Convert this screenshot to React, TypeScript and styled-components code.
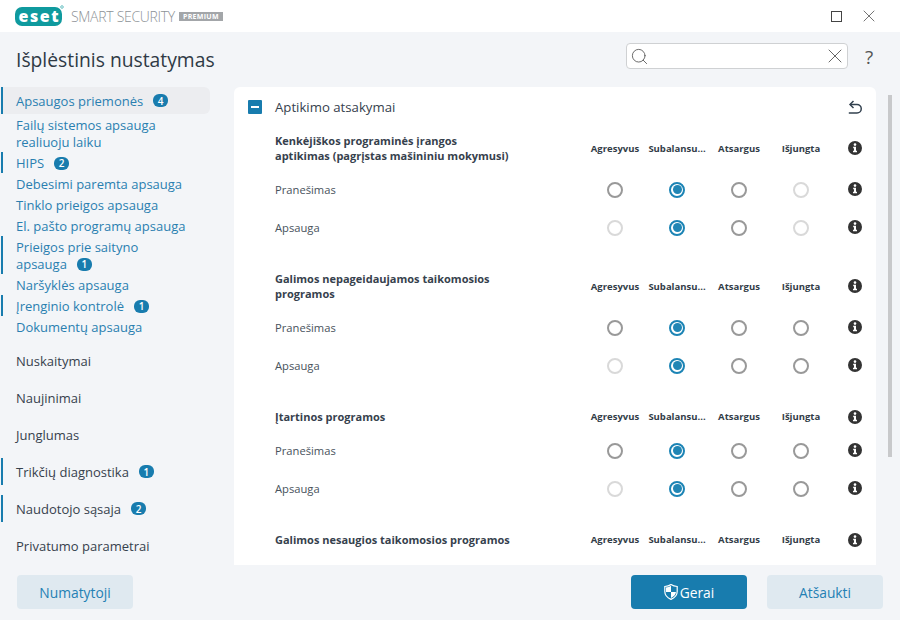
import React, { FC } from 'react';
import styled, { createGlobalStyle } from 'styled-components';
import { Search, X } from 'lucide-react';

const GlobalStyle = createGlobalStyle`
  html, body {
    margin: 0;
    padding: 0;
    background: #f3f5f8;
  }
  * {
    box-sizing: border-box;
  }
`;

const Window = styled.div`
  width: 900px;
  height: 620px;
  display: flex;
  flex-direction: column;
  overflow: hidden;
  background: #f3f5f8;
  color: #36414d;
  font-family: 'Open Sans', 'Noto Sans', sans-serif;
`;

const TitleBar = styled.div`
  height: 32px;
  flex: none;
  display: flex;
  align-items: center;
  padding: 0 21px 0 15px;
  background: #fff;
`;

const ProductName = styled.span`
  margin-left: 7px;
  font-size: 14px;
  font-weight: 300;
  letter-spacing: -0.3px;
  color: #8d9296;
`;

const Edition = styled.span`
  margin-left: 4px;
  height: 9px;
  padding: 0 4px;
  display: flex;
  align-items: center;
  background: #a3a6a9;
  color: #fff;
  font-size: 7px;
  font-weight: 700;
  letter-spacing: 0.3px;
`;

const WindowControls = styled.div`
  margin-left: auto;
  display: flex;
  align-items: center;
  gap: 17px;
  color: #444;
`;

const Maximize = styled.span`
  width: 11px;
  height: 11px;
  border: 1px solid #444;
`;

const Header = styled.div`
  height: 55px;
  flex: none;
  display: flex;
  align-items: center;
  padding: 0 20px 0 16px;
`;

const Title = styled.h1`
  margin: 0;
  font-size: 19.3px;
  font-weight: 500;
  color: #2f3a45;
`;

const SearchBox = styled.div`
  margin: 0 0 7px auto;
  width: 222px;
  height: 26px;
  display: flex;
  align-items: center;
  justify-content: space-between;
  padding: 0 0 0 3px;
  background: #fff;
  border: 1px solid #cfd1d3;
  border-radius: 4px;
  color: #555;
`;

const Help = styled.span`
  width: 22px;
  margin: 0 0 6px 10px;
  text-align: center;
  font-size: 19px;
  color: #555;
`;

const Body = styled.div`
  flex: 1;
  min-height: 0;
  display: flex;
`;

const Sidebar = styled.nav`
  width: 209px;
  margin-left: 1px;
  flex: none;
  overflow: hidden;
  display: flex;
  flex-direction: column;
`;

const TopItem = styled.div<{ $marked?: boolean; $active?: boolean }>`
  height: 27px;
  flex: none;
  margin-bottom: 10px;
  display: flex;
  align-items: center;
  padding-left: 13px;
  border-left: 2px solid ${(p) => (p.$marked ? '#187cae' : 'transparent')};
  border-radius: 0 6px 6px 0;
  background: ${(p) => (p.$active ? '#ecedf0' : 'transparent')};
  color: ${(p) => (p.$active ? '#2a7fb0' : '#36414d')};
  font-size: 13px;
`;

const SubList = styled.div`
  margin: -10px 0 10px;
  flex: none;
  display: flex;
  flex-direction: column;
`;

const SubItem = styled.div<{ $marked?: boolean }>`
  min-height: 21px;
  padding: 3px 18px 1px 13px;
  border-left: 2px solid ${(p) => (p.$marked ? '#187cae' : 'transparent')};
  color: #2a7fb0;
  font-size: 13px;
  line-height: 17px;
`;

const Badge = styled.span`
  display: inline-flex;
  align-items: center;
  justify-content: center;
  width: 15px;
  height: 13px;
  margin-left: 10px;
  vertical-align: 1px;
  border-radius: 6px;
  background: #187cae;
  color: #fff;
  font-size: 10px;
  font-weight: 600;
`;

const Panel = styled.section`
  width: 642px;
  margin-left: 24px;
  flex: none;
  overflow: hidden;
  background: #fff;
  border-radius: 6px 6px 0 0;
`;

const PanelHead = styled.div`
  height: 38px;
  padding: 2px 14px 0;
  display: flex;
  align-items: center;
  font-size: 13.2px;
  color: #36414d;
`;

const Collapse = styled.span`
  width: 14px;
  height: 14px;
  margin-right: 13px;
  display: flex;
  align-items: center;
  justify-content: center;
  border-radius: 1px;
  background: #187cae;

  &::after {
    content: '';
    width: 8px;
    height: 2px;
    background: #fff;
  }
`;

const Reset = styled.span`
  margin-left: auto;
  display: flex;
`;

const Group = styled.div`
  margin-bottom: 17px;
`;

const SettingGrid = styled.div`
  display: grid;
  grid-template-columns: 309px repeat(4, 62px) 44px;
  align-items: center;
  padding-left: 41px;
`;

const GroupHead = styled(SettingGrid)`
  padding-top: 8px;
  padding-bottom: 7px;
`;

const GroupTitle = styled.div`
  max-width: 236px;
  font-size: 11px;
  font-weight: 700;
  line-height: 15px;
  color: #36414d;
`;

const ColumnLabel = styled.div`
  text-align: center;
  font-size: 9.5px;
  font-weight: 700;
  white-space: nowrap;
  color: #333d48;
`;

const SettingRow = styled(SettingGrid)`
  height: 38px;
`;

const RowLabel = styled.div`
  font-size: 11.2px;
  color: #47525c;
`;

const RadioCell = styled.div`
  padding-top: 1px;
  display: flex;
  justify-content: center;
`;

const Radio = styled.span<{ $checked?: boolean; $disabled?: boolean }>`
  width: 16px;
  height: 16px;
  border-radius: 50%;
  display: flex;
  align-items: center;
  justify-content: center;
  border: 2px solid
    ${(p) => (p.$checked ? '#1c84b5' : p.$disabled ? '#d9d9d9' : '#999')};

  &::after {
    content: '';
    display: ${(p) => (p.$checked ? 'block' : 'none')};
    width: 9px;
    height: 9px;
    border-radius: 50%;
    background: #2186b5;
  }
`;

const InfoCell = styled.div`
  display: flex;
  justify-content: flex-end;
  padding-right: 14px;
`;

const ScrollColumn = styled.div`
  flex: 1;
  padding: 8px 0 0 12px;
`;

const ScrollThumb = styled.div`
  width: 4px;
  height: 362px;
  background: #c8c9cb;
`;

const Footer = styled.div`
  height: 55px;
  flex: none;
  display: flex;
  align-items: flex-start;
  padding: 10px 17px 0;
`;

const Button = styled.button<{ $primary?: boolean }>`
  width: 116px;
  height: 34px;
  display: flex;
  align-items: center;
  justify-content: center;
  gap: 2px;
  border: 0;
  border-radius: 4px;
  background: ${(p) => (p.$primary ? '#187cae' : '#dfe9f0')};
  color: ${(p) => (p.$primary ? '#fff' : '#2480b4')};
  font-family: inherit;
  font-size: 13.8px;
  font-weight: 500;
`;

const RightButtons = styled.div`
  margin-left: auto;
  display: flex;
  gap: 20px;
`;

const EsetLogo: FC = () => (
  <svg width="49" height="22" viewBox="0 0 49 22">
    <rect x="0" y="2" width="47" height="19" rx="7" fill="#0f9a9e" />
    <text
      x="23.500"
      y="16.500"
      textAnchor="middle"
      fill="#fff"
      fontFamily="'Open Sans', sans-serif"
      fontSize="16"
      fontWeight="800"
      textLength="40"
      lengthAdjust="spacing"
    >
      eset
    </text>
    <circle cx="47" cy="2" r="1.300" fill="#fff" stroke="#0f9a9e" strokeWidth="0.600" />
  </svg>
);

const InfoIcon: FC = () => (
  <svg width="14" height="14" viewBox="0 0 14 14">
    <circle cx="7" cy="7" r="7" fill="#333" />
    <circle cx="7" cy="3.600" r="1.300" fill="#fff" />
    <path d="M5.200 5.800H8v4h1v1.400H5v-1.400h1V7.200h-.8z" fill="#fff" />
  </svg>
);

const ResetIcon: FC = () => (
  <svg width="14" height="14" viewBox="0 0 14 14" fill="none" stroke="#33414f" strokeWidth="1.500">
    <path d="M5.500 1 2 4.500 5.500 8" />
    <path d="M2 4.500h7a4 4 0 0 1 0 8.500H.8" />
  </svg>
);

const ShieldIcon: FC = () => (
  <svg width="14" height="16" viewBox="0 0 14 16">
    <path
      d="M7 .6c1.800 1.200 3.800 1.800 6.200 1.900v5c0 3.600-2.400 6.200-6.200 7.900C3.200 13.700.8 11.100.8 7.500v-5C3.200 2.400 5.200 1.800 7 .6z"
      fill="none"
      stroke="#fff"
      strokeWidth="1.200"
    />
    <path d="M7 1.800V8H2C2 5.500 2 4.300 2 3.600 3.900 3.400 5.500 2.800 7 1.800z" fill="#fff" />
    <path d="M7 8h5c-.3 2.500-2.200 4.600-5 6z" fill="#fff" />
  </svg>
);

type NavEntry = { label: string; badge?: number };

const subItems: NavEntry[] = [
  { label: 'Failų sistemos apsauga realiuoju laiku' },
  { label: 'HIPS', badge: 2 },
  { label: 'Debesimi paremta apsauga' },
  { label: 'Tinklo prieigos apsauga' },
  { label: 'El. pašto programų apsauga' },
  { label: 'Prieigos prie saityno apsauga', badge: 1 },
  { label: 'Naršyklės apsauga' },
  { label: 'Įrenginio kontrolė', badge: 1 },
  { label: 'Dokumentų apsauga' },
];

const topItems: NavEntry[] = [
  { label: 'Nuskaitymai' },
  { label: 'Naujinimai' },
  { label: 'Junglumas' },
  { label: 'Trikčių diagnostika', badge: 1 },
  { label: 'Naudotojo sąsaja', badge: 2 },
  { label: 'Privatumo parametrai' },
];

const columns = ['Agresyvus', 'Subalansu...', 'Atsargus', 'Išjungta'];

// 0 = enabled, 1 = checked, 2 = disabled
type RadioRow = { label: string; states: number[] };
type SettingGroup = { title: string; rows: RadioRow[] };

const groups: SettingGroup[] = [
  {
    title: 'Kenkėjiškos programinės įrangos aptikimas (pagrįstas mašininiu mokymusi)',
    rows: [
      { label: 'Pranešimas', states: [0, 1, 0, 2] },
      { label: 'Apsauga', states: [2, 1, 0, 2] },
    ],
  },
  {
    title: 'Galimos nepageidaujamos taikomosios programos',
    rows: [
      { label: 'Pranešimas', states: [0, 1, 0, 0] },
      { label: 'Apsauga', states: [2, 1, 0, 0] },
    ],
  },
  {
    title: 'Įtartinos programos',
    rows: [
      { label: 'Pranešimas', states: [0, 1, 0, 0] },
      { label: 'Apsauga', states: [2, 1, 0, 0] },
    ],
  },
  {
    title: 'Galimos nesaugios taikomosios programos',
    rows: [],
  },
];

const App: FC = () => {
  return (
    <Window>
      <GlobalStyle />
      <TitleBar>
        <EsetLogo />
        <ProductName>SMART SECURITY</ProductName>
        <Edition>PREMIUM</Edition>
        <WindowControls>
          <Maximize />
          <X size={20} strokeWidth={0.9} />
        </WindowControls>
      </TitleBar>
      <Header>
        <Title>Išplėstinis nustatymas</Title>
        <SearchBox>
          <Search size={19} strokeWidth={1.1} />
          <X size={24} strokeWidth={0.9} />
        </SearchBox>
        <Help>?</Help>
      </Header>
      <Body>
        <Sidebar>
          <TopItem $marked $active>
            Apsaugos priemonės
            <Badge>4</Badge>
          </TopItem>
          <SubList>
            {subItems.map((item) => (
              <SubItem key={item.label} $marked={item.badge !== undefined}>
                {item.label}
                {item.badge !== undefined && <Badge>{item.badge}</Badge>}
              </SubItem>
            ))}
          </SubList>
          {topItems.map((item) => (
            <TopItem key={item.label} $marked={item.badge !== undefined}>
              {item.label}
              {item.badge !== undefined && <Badge>{item.badge}</Badge>}
            </TopItem>
          ))}
        </Sidebar>
        <Panel>
          <PanelHead>
            <Collapse />
            Aptikimo atsakymai
            <Reset>
              <ResetIcon />
            </Reset>
          </PanelHead>
          {groups.map((group) => (
            <Group key={group.title}>
              <GroupHead>
                <GroupTitle>{group.title}</GroupTitle>
                {columns.map((col) => (
                  <ColumnLabel key={col}>{col}</ColumnLabel>
                ))}
                <InfoCell>
                  <InfoIcon />
                </InfoCell>
              </GroupHead>
              {group.rows.map((row) => (
                <SettingRow key={row.label}>
                  <RowLabel>{row.label}</RowLabel>
                  {row.states.map((state, i) => (
                    <RadioCell key={i}>
                      <Radio $checked={state === 1} $disabled={state === 2} />
                    </RadioCell>
                  ))}
                  <InfoCell>
                    <InfoIcon />
                  </InfoCell>
                </SettingRow>
              ))}
            </Group>
          ))}
        </Panel>
        <ScrollColumn>
          <ScrollThumb />
        </ScrollColumn>
      </Body>
      <Footer>
        <Button>Numatytoji</Button>
        <RightButtons>
          <Button $primary>
            <ShieldIcon />
            Gerai
          </Button>
          <Button>Atšaukti</Button>
        </RightButtons>
      </Footer>
    </Window>
  );
};

export default App;
